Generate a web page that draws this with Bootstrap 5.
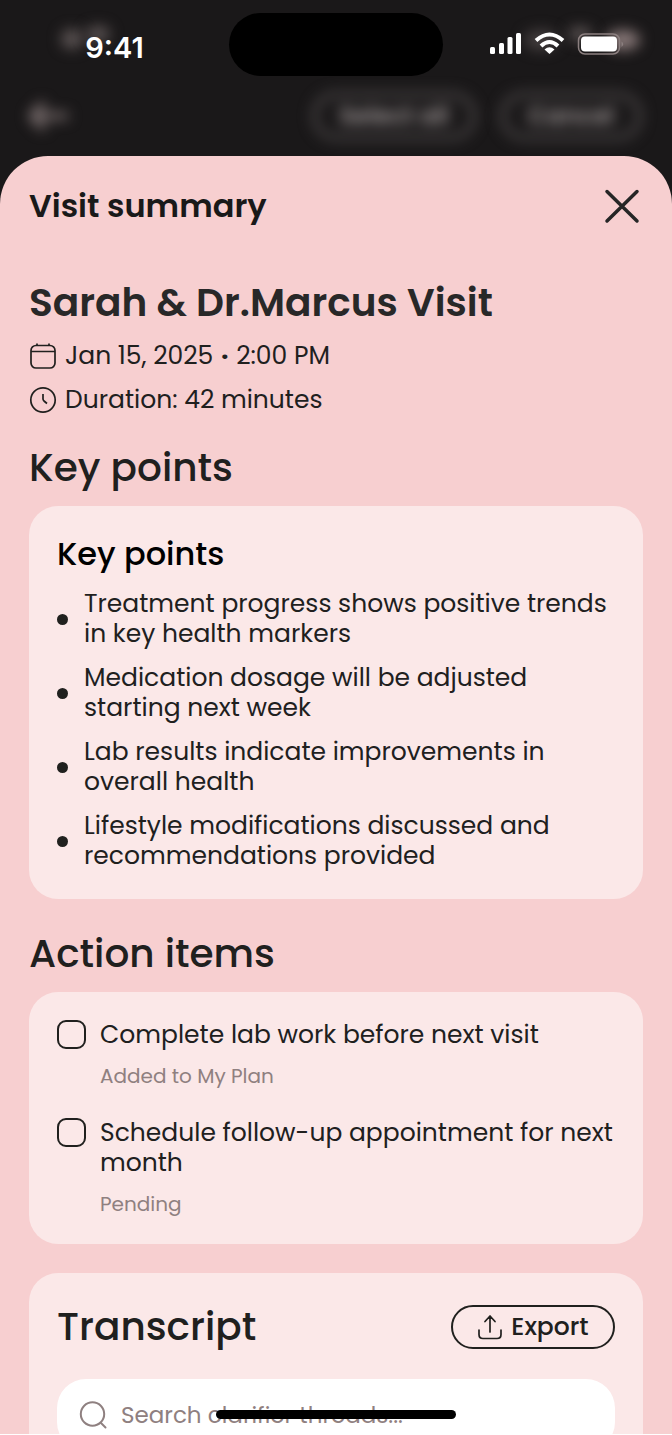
<!DOCTYPE html>
<html lang="en">
<head>
<meta charset="utf-8">
<meta name="viewport" content="width=device-width, initial-scale=1">
<title>Visit summary</title>
<link href="https://cdn.jsdelivr.net/npm/bootstrap@5.3.0/dist/css/bootstrap.min.css" rel="stylesheet">
<style>
  :root { --ink: #20201e; --muted-ink: #8f8080; --sheet: #f7cfd0; --panel: #fbe8e8; }
  body { font-family: Poppins, Inter, "Liberation Sans", sans-serif; color: var(--ink); background: #1a1819; font-size: 25px; line-height: 30px; }
  .screen { height: 100vh; overflow: hidden; border-bottom: 1px solid #fff; }
  .status-row { display: grid; grid-template-columns: 1fr 214px 1fr; height: 76px; padding-top: 13px; }
  .island { background: #000; border-radius: 32px; }
  .clock { font-family: Inter, sans-serif; font-size: 29px; font-weight: 600; color: #fff; padding-top: 7px; }
  .glow { position: absolute; border-radius: 50%; background: #5d5555; filter: blur(7px); }
  .glow-a { left: 61px; top: 29px; width: 22px; height: 20px; }
  .glow-b { left: 86px; top: 26px; width: 24px; height: 16px; }
  .glow-c { right: 32px; top: 30px; width: 34px; height: 20px; background: #8a7a7a; }
  .glow-d { right: 80px; top: 27px; width: 24px; height: 14px; }
  .glow-e { right: 114px; top: 30px; width: 34px; height: 20px; background: #453f40; }
  .behind { height: 80px; padding: 0 30px 0 26px; }
  .behind button { color: #a09898; background: none; border: 5px solid #4d494a; border-radius: 26px; height: 48px; font-size: 24px; line-height: 30px; font-weight: 600; filter: blur(7px); }
  .behind .back-btn { border: 0; padding: 0; }
  .wide-btn { width: 164px; }
  .slim-btn { width: 142px; }
  .sheet { background: var(--sheet); border-radius: 48px 48px 0 0; padding: 28px 29px 29px; }
  .sheet-title { font-size: 32px; line-height: 44px; font-weight: 600; color: #191919; }
  .visit-title { font-size: 39px; line-height: 48px; font-weight: 600; color: #282828; margin: 51px 0 14px; }
  .meta-line { gap: 8px; margin-bottom: 14px; }
  .meta-dot { padding: 0 1px; font-weight: 700; }
  .section-title { font-size: 39px; line-height: 48px; font-weight: 500; margin: 29px 0 14px; }
  .panel { background: var(--panel); border-radius: 29px; padding: 28px; }
  .panel + .section-title { margin-top: 31px; }
  .panel-title { font-size: 32px; line-height: 40px; font-weight: 500; color: #000; margin-bottom: 15px; }
  .points li { display: flex; align-items: center; gap: 16px; }
  .points li::before { content: ""; flex: none; width: 11px; height: 11px; border-radius: 50%; background: var(--ink); }
  .stack { display: grid; gap: 14px; }
  .tasks { display: grid; gap: 30px; margin-bottom: 29px; }
  .transcript { padding-top: 30px; }
  .task { display: grid; grid-template-columns: 29px 1fr; column-gap: 14px; row-gap: 14px; }
  .task .form-check-input[type=checkbox] { width: 29px; height: 29px; margin: 0; border: 2px solid var(--ink); border-radius: 9px; background-color: transparent; }
  .task small { grid-column: 2; font-size: 20px; line-height: 24px; color: var(--muted-ink); }
  .export-btn { width: 164px; height: 44px; border: 2px solid var(--ink); border-radius: 22px; color: var(--ink); font-size: 25px; line-height: 30px; font-weight: 500; gap: 8px; padding: 0; }
  .search-box { background: #fff; border-radius: 29px; height: 72px; padding: 0 22px; gap: 14px; margin-top: 28px; }
  .search-box input { font-size: 23px; color: var(--ink); padding: 0; }
  .search-box input::placeholder { color: var(--muted-ink); opacity: 1; }
  .home-bar { position: fixed; left: 50%; bottom: 16px; width: 240px; height: 9px; margin-left: -120px; border-radius: 5px; background: #000; }
</style>
</head>
<body>
<div class="screen position-relative">
  <span class="glow glow-a"></span><span class="glow glow-b"></span>
  <span class="glow glow-c"></span><span class="glow glow-d"></span><span class="glow glow-e"></span>
  <div class="status-row position-relative">
    <div class="clock d-flex align-items-center justify-content-center">9:41</div>
    <div class="island"></div>
    <div class="d-flex align-items-center justify-content-end pe-4">
      <svg width="162" height="34" viewBox="0 0 162 34" fill="#fff" aria-label="Signal, Wi-Fi and battery">
        <rect x="4" y="19" width="5" height="7" rx="1.5"/><rect x="13" y="15" width="5" height="11" rx="1.5"/><rect x="21.500" y="9" width="5" height="17" rx="1.500"/><rect x="30" y="5" width="5" height="21" rx="1.500"/>
        <g fill="none" stroke="#fff" stroke-width="4"><path d="M50 12.500Q63.500 .500 77 12.500"/><path d="M55 18Q63.500 10 72 18"/></g>
        <path d="M58.500 21.500Q63.500 17 68.500 21.500L63.500 26Z"/>
        <rect x="92.500" y="6" width="41" height="20" rx="6.500" fill="none" stroke="#8c8080" stroke-width="1.500"/>
        <rect x="95" y="8.500" width="36" height="15" rx="4"/>
        <path d="M135.500 13.500Q139 16 135.500 19Z" fill="#8c8080"/>
      </svg>
    </div>
  </div>
  <div class="behind d-flex align-items-center">
    <button class="back-btn me-auto" type="button" aria-label="Back"><svg width="46" height="34" viewBox="0 0 46 34" fill="none" stroke="#857878" stroke-width="6"><path d="M18 4L6 17L18 30M6 17H42"/></svg></button>
    <button class="wide-btn me-4" type="button">Select all</button>
    <button class="slim-btn" type="button">Cancel</button>
  </div>
  <main class="sheet position-relative">
    <header class="d-flex align-items-center justify-content-between">
      <h1 class="sheet-title m-0">Visit summary</h1>
      <button class="btn p-0 border-0 d-flex" type="button" aria-label="Close"><svg width="42" height="44" viewBox="0 0 42 44" fill="none" stroke="#262626" stroke-width="3.500" stroke-linecap="round"><path d="M6 7.500L36 37M36 7.500L6 37"/></svg></button>
    </header>
    <h2 class="visit-title">Sarah &amp; Dr.Marcus Visit</h2>
    <div class="meta-line d-flex align-items-center">
      <svg width="28" height="30" viewBox="0 0 28 30" fill="none" stroke="#20201e" stroke-width="1.700"><rect x="2" y="4.500" width="24" height="22.500" rx="5"/><path d="M2 10.500H26M8 2.500V4.500M20 2.500V4.500"/></svg>
      <span>Jan 15, 2025 <span class="meta-dot">·</span> 2:00 PM</span>
    </div>
    <div class="meta-line d-flex align-items-center">
      <svg width="28" height="30" viewBox="0 0 28 30" fill="none" stroke="#20201e" stroke-width="1.700"><circle cx="14" cy="15" r="12.200"/><path d="M14 9V14Q14 15 15 16L18 18.500"/></svg>
      <span>Duration: 42 minutes</span>
    </div>
    <h2 class="section-title">Key points</h2>
    <section class="panel">
      <h3 class="panel-title">Key points</h3>
      <ul class="points stack list-unstyled m-0">
        <li>Treatment progress shows positive trends in key health markers</li>
        <li>Medication dosage will be adjusted starting next week</li>
        <li>Lab results indicate improvements in overall health</li>
        <li>Lifestyle modifications discussed and recommendations provided</li>
      </ul>
    </section>
    <h2 class="section-title">Action items</h2>
    <section class="panel tasks">
      <div class="task">
        <input class="form-check-input" type="checkbox" id="lab">
        <label for="lab">Complete lab work before next visit</label>
        <small>Added to My Plan</small>
      </div>
      <div class="task">
        <input class="form-check-input" type="checkbox" id="follow">
        <label for="follow">Schedule follow-up appointment for next month</label>
        <small>Pending</small>
      </div>
    </section>
    <section class="panel transcript">
      <div class="d-flex align-items-center justify-content-between">
        <h2 class="section-title m-0">Transcript</h2>
        <button class="btn export-btn d-flex align-items-center justify-content-center" type="button">
          <svg width="26" height="28" viewBox="0 0 26 28" fill="none" stroke="#20201e" stroke-width="1.700" stroke-linecap="round" stroke-linejoin="round"><path d="M2 17V21.500Q2 25.500 6 25.500H20Q24 25.500 24 21.500V17M13 19V3M8 8.500L13 3L18 8.500"/></svg>Export</button>
      </div>
      <div class="search-box d-flex align-items-center">
        <svg class="flex-shrink-0" width="28" height="28" viewBox="0 0 28 28" fill="none" stroke="#8f8080" stroke-width="2" stroke-linecap="round"><circle cx="13.500" cy="13" r="11.700"/><path d="M22 22L26.500 26.500"/></svg>
        <input class="form-control border-0 bg-transparent shadow-none" type="search" placeholder="Search clarifier threads..." aria-label="Search clarifier threads">
      </div>
    </section>
  </main>
  <div class="home-bar"></div>
</div>
<script src="https://cdn.jsdelivr.net/npm/bootstrap@5.3.0/dist/js/bootstrap.bundle.min.js"></script>
</body>
</html>
